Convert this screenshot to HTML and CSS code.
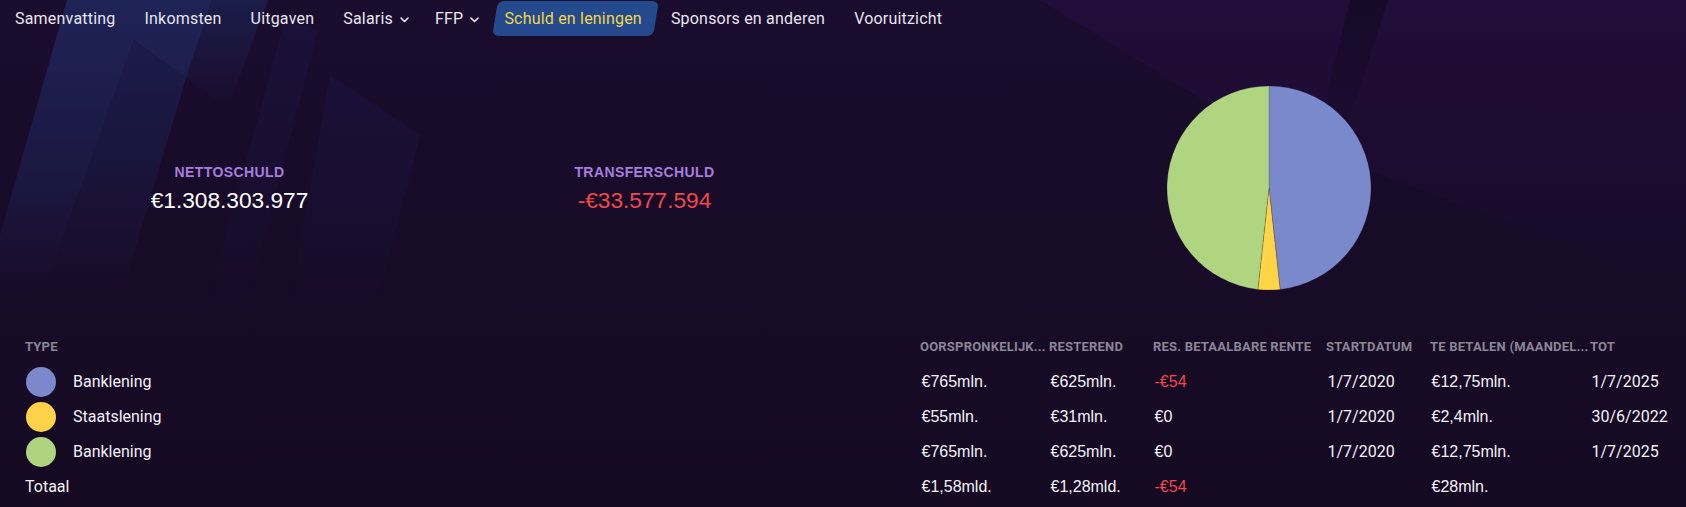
FILE: index.html
```html
<!DOCTYPE html>
<html lang="nl">
<head>
<meta charset="utf-8">
<title>Schuld en leningen</title>
<link rel="stylesheet" href="styles.css">
</head>
<body>
<nav class="tabs">
  <a class="tab">Samenvatting</a>
  <a class="tab">Inkomsten</a>
  <a class="tab">Uitgaven</a>
  <a class="tab menu">Salaris<svg class="chev" viewBox="0 0 9 6"><polyline points="1,1 4.5,4.5 8,1"/></svg></a>
  <a class="tab menu">FFP<svg class="chev" viewBox="0 0 9 6"><polyline points="1,1 4.5,4.5 8,1"/></svg></a>
  <a class="tab active">Schuld en leningen</a>
  <a class="tab">Sponsors en anderen</a>
  <a class="tab">Vooruitzicht</a>
</nav>

<section class="overview">
  <div class="stat">
    <div class="stat-label">NETTOSCHULD</div>
    <div class="stat-value">€1.308.303.977</div>
  </div>
  <div class="stat">
    <div class="stat-label">TRANSFERSCHULD</div>
    <div class="stat-value neg">-€33.577.594</div>
  </div>
  <div class="chart">
    <svg class="pie" viewBox="0 0 204 204">
      <path class="s-blue" d="M102 102 L102 0 A102 102 0 0 1 113.105 203.394 Z"/>
      <path class="s-yellow" d="M102 102 L113.105 203.394 A102 102 0 0 1 90.895 203.394 Z"/>
      <path class="s-green" d="M102 102 L90.895 203.394 A102 102 0 0 1 102 0 Z"/>
    </svg>
  </div>
</section>

<div class="loans">
  <div class="row head">
    <div class="cell">TYPE</div>
    <div class="cell">OORSPRONKELIJK...</div>
    <div class="cell">RESTEREND</div>
    <div class="cell">RES. BETAALBARE RENTE</div>
    <div class="cell">STARTDATUM</div>
    <div class="cell">TE BETALEN (MAANDEL...</div>
    <div class="cell">TOT</div>
  </div>
  <div class="row">
    <div class="cell type"><span class="dot blue"></span>Banklening</div>
    <div class="cell num">€765mln.</div>
    <div class="cell num">€625mln.</div>
    <div class="cell num neg">-€54</div>
    <div class="cell">1/7/2020</div>
    <div class="cell num">€12,75mln.</div>
    <div class="cell">1/7/2025</div>
  </div>
  <div class="row">
    <div class="cell type"><span class="dot yellow"></span>Staatslening</div>
    <div class="cell num">€55mln.</div>
    <div class="cell num">€31mln.</div>
    <div class="cell num">€0</div>
    <div class="cell">1/7/2020</div>
    <div class="cell num">€2,4mln.</div>
    <div class="cell">30/6/2022</div>
  </div>
  <div class="row">
    <div class="cell type"><span class="dot green"></span>Banklening</div>
    <div class="cell num">€765mln.</div>
    <div class="cell num">€625mln.</div>
    <div class="cell num">€0</div>
    <div class="cell">1/7/2020</div>
    <div class="cell num">€12,75mln.</div>
    <div class="cell">1/7/2025</div>
  </div>
  <div class="row total">
    <div class="cell">Totaal</div>
    <div class="cell num">€1,58mld.</div>
    <div class="cell num">€1,28mld.</div>
    <div class="cell num neg">-€54</div>
    <div class="cell"></div>
    <div class="cell num">€28mln.</div>
    <div class="cell"></div>
  </div>
</div>
</body>
</html>
```

FILE: styles.css
```css
* { box-sizing: border-box; }

html, body { margin: 0; padding: 0; }

body {
  width: 1686px;
  height: 507px;
  overflow: hidden;
  font-family: Roboto, "Liberation Sans", sans-serif;
  color: #eeecf4;
  background-color: #160a24;
  background-repeat: no-repeat;
  background-image: url("data:image/svg+xml;utf8,<svg xmlns='http://www.w3.org/2000/svg' width='1686' height='507' viewBox='0 0 1686 507'><defs><linearGradient id='g' x1='0' y1='0' x2='0' y2='1'><stop offset='0' stop-color='%231a0c2d'/><stop offset='1' stop-color='%23150a22'/></linearGradient><linearGradient id='a' x1='0' y1='0' x2='0' y2='1'><stop offset='0' stop-color='%231e2356'/><stop offset='0.6' stop-color='%231e2356' stop-opacity='0.5'/><stop offset='1' stop-color='%231e2356' stop-opacity='0'/></linearGradient><linearGradient id='b' x1='0' y1='0' x2='0' y2='1'><stop offset='0' stop-color='%231b1c4a'/><stop offset='1' stop-color='%231b1c4a' stop-opacity='0'/></linearGradient><linearGradient id='c' x1='0' y1='0' x2='0' y2='1'><stop offset='0' stop-color='%231a1038'/><stop offset='1' stop-color='%231a1038' stop-opacity='0'/></linearGradient><linearGradient id='p' x1='0' y1='0' x2='0' y2='1'><stop offset='0' stop-color='%23200d39'/><stop offset='0.5' stop-color='%231f0c36' stop-opacity='0.6'/><stop offset='1' stop-color='%231f0c36' stop-opacity='0'/></linearGradient><linearGradient id='d' x1='0' y1='0' x2='0' y2='1'><stop offset='0' stop-color='%23170a27'/><stop offset='1' stop-color='%23170a27' stop-opacity='0'/></linearGradient></defs><rect width='1686' height='507' fill='url(%23g)'/><polygon points='67,0 212,0 186,78 134,40 40,300 0,300 0,235' fill='url(%23a)'/><polygon points='134,40 186,78 120,300 40,300' fill='url(%23b)'/><polygon points='212,0 268,0 228,108 186,78' fill='url(%23b)'/><polygon points='285,20 318,30 240,330 200,330' fill='url(%23c)'/><polygon points='330,75 420,135 370,330 285,330' fill='url(%23c)'/><polygon points='1040,0 1686,0 1686,290 1236,120' fill='url(%23p)'/><polygon points='1350,0 1388,0 1334,170 1308,170' fill='url(%23d)'/></svg>");
}

/* ---------- tabs ---------- */
.tabs {
  display: flex;
  height: 35px;
  margin-top: 1px;
  padding-left: 1px;
  gap: 1px;
}

.tab {
  position: relative;
  z-index: 0;
  display: flex;
  align-items: center;
  padding: 0 14px;
  font-size: 16px;
  letter-spacing: 0.2px;
  color: #e8e6ef;
  text-decoration: none;
  white-space: nowrap;
  cursor: pointer;
}

.tab.active {
  color: #efd64b;
  padding: 0 14px 0 13px;
}

.tab.active::before {
  content: "";
  position: absolute;
  top: 0;
  bottom: 0;
  left: 3.5px;
  right: 0;
  background: #24498c;
  border-radius: 6px;
  transform: skewX(-9deg);
  z-index: -1;
}

.chev {
  width: 9px;
  height: 6px;
  margin-left: 7px;
  margin-right: -3px;
  margin-top: 3px;
  fill: none;
  stroke: #e8e6ef;
  stroke-width: 1.6;
  stroke-linecap: round;
  stroke-linejoin: round;
}

/* ---------- overview ---------- */
.overview {
  display: grid;
  grid-template-columns: 415px 415px 1fr;
  align-items: center;
  height: 204px;
  margin-top: 50px;
  padding-left: 22px;
}

.stat {
  text-align: center;
  font-family: "Liberation Sans", Arial, sans-serif;
}

.stat-label {
  font-size: 14px;
  line-height: 16px;
  font-weight: 700;
  letter-spacing: 0.4px;
  color: #a67ede;
}

.stat-value {
  margin-top: 7px;
  font-size: 22.7px;
  line-height: 26px;
  color: #ffffff;
}

.neg { color: #f2484c; }

.chart {
  display: flex;
  justify-content: center;
}

.pie {
  display: block;
  width: 204px;
  height: 204px;
}

.pie path {
  stroke: rgba(40, 30, 60, 0.35);
  stroke-width: 0.6;
}

.s-blue { fill: #7a89cc; }
.s-yellow { fill: #ffd447; }
.s-green { fill: #b0d581; }

/* ---------- loans table ---------- */
.loans {
  margin-top: 39px;
  padding-left: 25px;
}

.row {
  display: grid;
  grid-template-columns: 895px 129px 104px 173px 104px 160px 1fr;
  align-items: center;
  height: 35px;
  font-size: 16px;
  color: #f3f1f8;
}

.cell {
  white-space: nowrap;
  overflow: hidden;
  line-height: 35px;
}

.head .cell {
  font-size: 13px;
  font-weight: 700;
  letter-spacing: 0.2px;
  color: #8b8696;
}

.row:not(.head) .cell + .cell { padding-left: 1.5px; }

.num { font-family: "Liberation Sans", Arial, sans-serif; }

.type {
  display: flex;
  align-items: center;
}

.dot {
  flex: none;
  width: 30px;
  height: 30px;
  margin-left: 1px;
  margin-right: 17px;
  border-radius: 50%;
}

.dot.blue { background: #7b88cb; }
.dot.yellow { background: #fed249; }
.dot.green { background: #afd47f; }
```
